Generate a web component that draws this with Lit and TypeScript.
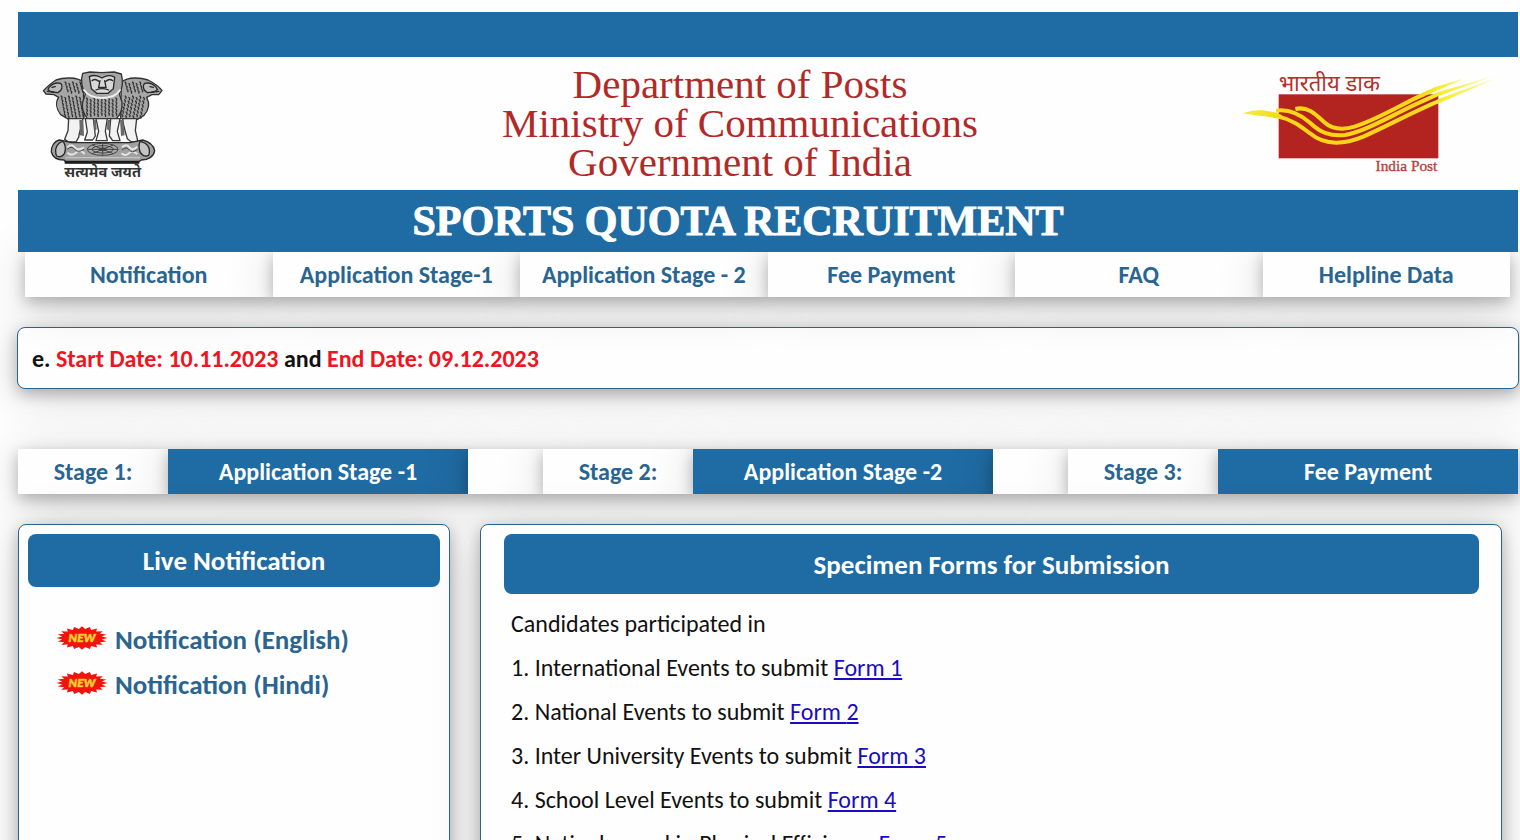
import { LitElement, html, css, svg } from "lit";
import { customElement } from "lit/decorators.js";

@customElement("state-emblem")
class StateEmblem extends LitElement {
  static styles = css`
    :host { display: block; }
    svg { display: block; width: 100%; height: auto; }
    .motto { font: bold 44px "Noto Sans", "Liberation Sans", sans-serif; }
  `;

  private curls(x: number, y: number, cols: number, rows: number, lean: number) {
    const out = [];
    for (let r = 0; r < rows; r++) {
      for (let c = 0; c < cols; c++) {
        const cx = x + c * 11 + r * lean;
        const cy = y + r * 11 + (c % 2) * 4;
        out.push(svg`<path d="M${cx} ${cy}q6 1 3 9"/>`);
      }
    }
    return out;
  }

  render() {
    return html`
      <svg viewBox="0 0 420 375" role="img" aria-label="State Emblem of India">
        <g fill="#a6a6a6" stroke="#333" stroke-width="4" stroke-linejoin="round">
          <path d="M160 66C140 50 100 52 78 60C62 70 48 84 40 92L48 102L72 104L86 112C76 126 78 146 92 164L116 178L162 176Z"/>
          <path d="M274 66C296 50 330 52 354 60C374 70 388 80 396 92L386 104L366 104L350 112C360 130 356 150 342 166L322 178L272 176Z"/>
          <path d="M158 40L180 36L216 38L252 36L274 42C280 66 276 88 268 102L276 126C278 150 268 168 258 176H172C160 160 154 146 158 126L166 102C156 84 152 60 158 40Z"/>
        </g>
        <g fill="#f2f2f2" stroke="#3a3a3a" stroke-width="4" stroke-linejoin="round">
          <path d="M116 176L114 212L104 238L116 246H138L146 232C148 210 158 194 158 176Z"/>
          <path d="M166 176L172 216L164 240H188L196 228L190 176Z"/>
          <path d="M198 176L206 214L198 242H232L226 214L232 176Z"/>
          <path d="M242 176L238 228L248 242H270L262 214L270 176Z"/>
          <path d="M278 176C280 200 286 216 292 236L304 246H324L316 212L320 176Z"/>
        </g>
        <g fill="#6a6a6a">
          <path d="M148 180L160 180L162 228L150 226ZM190 180H198L200 208L194 214ZM232 180H240L238 212L231 208ZM270 180H280L284 226L273 228Z"/>
        </g>
        <g fill="none" stroke="#333" stroke-width="4">
          ${this.curls(92, 108, 6, 6, 2)}
          ${this.curls(168, 114, 9, 5, 0)}
          ${this.curls(284, 108, 6, 6, -2)}
          ${this.curls(104, 66, 5, 3, 3)}
          ${this.curls(284, 66, 5, 3, 3)}
        </g>
        <g fill="#d8d8d8" stroke="#2a2a2a" stroke-width="4" stroke-linecap="round">
          <path d="M178 50C190 44 206 48 216 54C228 46 244 44 254 52L250 86L234 100H200L184 86Z"/>
          <path d="M186 62q10 -8 20 2M228 64q10 -10 20 -2M210 62l-4 20h22l-4 -20M198 90q18 -8 38 0" fill="none"/>
          <path d="M162 90C176 110 200 114 216 114S258 110 270 90" fill="none" stroke="#eee" stroke-width="6"/>
          <path d="M54 88C60 74 76 66 92 70C100 78 96 92 84 98C74 96 62 100 54 88ZM382 88C376 74 360 66 344 70C336 78 340 92 352 98C362 96 374 100 382 88Z" fill="#bbb"/>
          <path d="M66 82l10 -2M370 82l-10 -2M52 94l20 2M386 94l-20 2"/>
        </g>
        <g fill="#a0a0a0" stroke="#2a2a2a" stroke-width="4" stroke-linejoin="round">
          <path d="M88 240C72 244 62 262 64 276C68 292 82 300 102 300L110 308H322L334 300C356 300 372 288 374 272C370 254 354 244 338 240L300 248H126Z"/>
          <path d="M98 244C80 250 72 268 80 288C92 294 106 286 106 268C106 256 104 248 98 244ZM330 244C350 248 364 262 356 286C344 292 330 284 328 268C326 256 328 248 330 244Z" fill="#c4c4c4"/>
        </g>
        <g fill="none" stroke="#444" stroke-width="3">
          <ellipse cx="218" cy="268" rx="46" ry="18" fill="#aaa"/>
          <ellipse cx="218" cy="268" rx="32" ry="11"/>
          <ellipse cx="218" cy="268" rx="12" ry="4" fill="#333"/>
          <path d="M172 268H264M218 250V286M186 255L250 281M250 255L186 281"/>
          <path d="M112 262q12 -12 22 0t28 0M112 278q14 12 26 0t26 4M276 262q14 -12 22 0t24 -2M274 280q12 10 22 0t26 2" stroke="#e4e4e4" stroke-width="6"/>
          <path d="M112 268q12 -12 22 0t28 0M276 270q14 -12 22 0t24 -2"/>
          <path d="M106 293H330" stroke="#ccc"/>
        </g>
        <path d="M104 302H328V311H104Z" fill="#1c1c1c"/>
        <text class="motto" x="218" y="351" text-anchor="middle" fill="#333">सत्यमेव जयते</text>
      </svg>
    `;
  }
}

@customElement("post-logo")
class PostLogo extends LitElement {
  static styles = css`
    :host { display: block; }
    svg { display: block; width: 100%; height: auto; }
    .hindi { font: 66px "Noto Sans", "Liberation Serif", serif; }
    .english { font: 46px "Liberation Serif", serif; }
  `;

  render() {
    return html`
      <svg viewBox="36 0 780 375" role="img" aria-label="India Post">
        <defs>
          <linearGradient id="fade" gradientUnits="userSpaceOnUse" x1="560" y1="0" x2="800" y2="0">
            <stop offset="0" stop-color="#fcd616"/>
            <stop offset="0.35" stop-color="#f8ee3a"/>
            <stop offset="1" stop-color="#fbf8a8"/>
          </linearGradient>
          <linearGradient id="tail" gradientUnits="userSpaceOnUse" x1="40" y1="0" x2="170" y2="0">
            <stop offset="0" stop-color="#f3ec4a"/>
            <stop offset="0.8" stop-color="#f0de10"/>
            <stop offset="1" stop-color="#fcd616"/>
          </linearGradient>
        </defs>
        <text class="hindi" x="146" y="92" fill="#b5302c">भारतीय डाक</text>
        <rect x="146" y="103" width="479" height="192" fill="#b32420"/>
        <path d="M38 160C80 144 116 150 156 165L154 178C112 168 76 168 38 160Z" fill="url(#tail)"/>
        <g fill="none" stroke="url(#fade)" stroke-width="12">
          <path d="M146 170C190 180 216 202 240 220C280 254 336 256 400 230C480 194 560 150 625 124"/>
          <path d="M138 152C180 146 212 164 240 188C272 218 300 230 345 225C390 218 450 186 510 156C560 130 600 114 625 102"/>
          <path d="M196 147C232 138 256 162 282 186C304 206 334 212 374 200C440 178 500 142 560 113C580 104 600 94 620 86"/>
        </g>
        <g fill="url(#fade)">
          <path d="M622 118L800 54L627 130Z"/>
          <path d="M622 97L784 50L628 107Z"/>
          <path d="M616 81L700 56L624 91Z"/>
        </g>
        <text class="english" x="622" y="333" text-anchor="end" fill="#b5403c" stroke="#b5403c">India Post</text>
      </svg>
    `;
  }
}

@customElement("new-badge")
class NewBadge extends LitElement {
  static styles = css`
    :host { display: block; width: 52px; }
    svg { display: block; width: 100%; height: auto; }
    .word { font: italic 900 36px "Lato", sans-serif; }
  `;

  private points() {
    const list: string[] = [];
    const spikes = 20;
    for (let i = 0; i < spikes * 2; i++) {
      const a = (Math.PI * i) / spikes;
      const k = i % 2 ? 0.78 : 1;
      list.push(`${(78 + 77 * k * Math.cos(a)).toFixed(1)},${(36 + 35 * k * Math.sin(a)).toFixed(1)}`);
    }
    return list.join(" ");
  }

  render() {
    return html`
      <svg viewBox="0 0 156 84" role="img" aria-label="New">
        <polygon points=${this.points()} fill="#f3120d"/>
        <text class="word" x="78" y="49" text-anchor="middle" fill="#ffe733" stroke="#ffb52a" stroke-width="2">NEW</text>
      </svg>
    `;
  }
}

@customElement("app-root")
class AppRoot extends LitElement {
  static styles = css`
    :host {
      --blue: #1f6ba3;
      --ink: #2a6592;
      --card: 0 5px 15px rgba(0, 0, 0, 0.27), 0 6px 50px rgba(0, 0, 0, 0.16);
      display: block;
      height: 100vh;
      overflow-x: hidden;
      overflow-y: auto;
      scrollbar-width: none;
      background: #fefefe;
      color: #111;
      font-family: "Carlito", "Lato", sans-serif;
      font-size: 24px;
      line-height: 28px;
    }
    * { box-sizing: border-box; }
    a { color: inherit; text-decoration: none; }
    h1, h2, p, ul { margin: 0; padding: 0; list-style: none; }
    .page { padding: 12px 2px 0 18px; }
    header { position: relative; z-index: 1; }
    .strip { height: 45px; background: var(--blue); }
    .banner {
      display: grid;
      grid-template-columns: 220px 1fr 276px;
      align-items: start;
      height: 133px;
      padding-top: 3px;
      background: #fefefe;
    }
    .emblem { width: 140px; margin-left: 12px; }
    .logo { width: 260px; }
    .dept {
      padding-top: 5px;
      text-align: center;
      font-family: "Liberation Serif", serif;
      font-size: 41px;
      line-height: 39px;
      color: #b22a27;
    }
    .title {
      height: 62px;
      padding-right: 60px;
      background: var(--blue);
      color: #fff;
      text-align: center;
      font-family: "Liberation Serif", serif;
      font-weight: 700;
      font-size: 42px;
      line-height: 62px;
      -webkit-text-stroke: 1px #fff;
    }
    .nav {
      display: grid;
      grid-template-columns: repeat(6, 1fr);
      margin: 0 8px 0 7px;
    }
    .cell {
      display: block;
      height: 45px;
      line-height: 46px;
      background: #fefefe;
      color: var(--ink);
      text-align: center;
      font-weight: 700;
      box-shadow: var(--card);
    }
    .cell.solid { background: var(--blue); color: #fff; }
    .ticker {
      margin: 30px -1px 0;
      padding: 0 14px;
      height: 62px;
      line-height: 61px;
      overflow: hidden;
      white-space: nowrap;
      border: 1px solid var(--ink);
      border-radius: 8px;
      background: #fefefe;
      font-weight: 700;
      box-shadow: var(--card);
    }
    .date { color: #f0141e; }
    .stages {
      display: grid;
      grid-template-columns: 2fr 4fr 1fr 2fr 4fr 1fr 2fr 4fr;
      margin-top: 60px;
    }
    .columns {
      display: grid;
      grid-template-columns: 432fr 1022fr;
      gap: 30px;
      margin: 30px 16px 0 0;
    }
    .panel {
      min-height: 480px;
      border: 1px solid var(--ink);
      border-radius: 8px;
      background: #fefefe;
      box-shadow: var(--card);
    }
    .live { padding: 9px; }
    .forms { padding: 9px 22px 9px 23px; }
    .heading {
      border-radius: 8px;
      background: var(--blue);
      color: #fff;
      text-align: center;
      font-size: 27px;
      font-weight: 700;
      line-height: 32px;
      padding: 11px 0 10px;
    }
    .forms .heading { padding: 15px 0 13px; }
    .notices { padding: 30px 0 0 28px; }
    .notice {
      display: flex;
      align-items: center;
      gap: 7px;
      height: 45px;
      color: var(--ink);
      font-size: 27px;
      font-weight: 700;
    }
    .events { padding: 8px 7px; line-height: 44px; }
    .events a { color: #1a0dbf; text-decoration: underline; }
  `;

  private menu = ["Notification", "Application Stage-1", "Application Stage - 2", "Fee Payment", "FAQ", "Helpline Data"];
  private stages = [
    ["Stage 1:", "Application Stage -1"],
    ["Stage 2:", "Application Stage -2"],
    ["Stage 3:", "Fee Payment"],
  ];
  private events = [
    "International Events to submit",
    "National Events to submit",
    "Inter University Events to submit",
    "School Level Events to submit",
    "Natinal award in Physical Efficiency",
  ];

  render() {
    return html`
      <div class="page">
        <header>
          <div class="strip"></div>
          <div class="banner">
            <state-emblem class="emblem"></state-emblem>
            <div class="dept">
              <p>Department of Posts</p>
              <p>Ministry of Communications</p>
              <p>Government of India</p>
            </div>
            <post-logo class="logo"></post-logo>
          </div>
          <h1 class="title">SPORTS QUOTA RECRUITMENT</h1>
        </header>
        <nav class="nav">
          ${this.menu.map((m) => html`<a class="cell" href="#">${m}</a>`)}
        </nav>
        <p class="ticker">e. <span class="date">Start Date: 10.11.2023</span> and <span class="date">End Date: 09.12.2023</span></p>
        <div class="stages">
          ${this.stages.map(
            ([label, action], i) => html`
              ${i ? html`<span class="cell"></span>` : ""}
              <span class="cell">${label}</span>
              <a class="cell solid" href="#">${action}</a>
            `
          )}
        </div>
        <main class="columns">
          <section class="panel live">
            <h2 class="heading">Live Notification</h2>
            <ul class="notices">
              ${["English", "Hindi"].map(
                (l) => html`<li><a class="notice" href="#"><new-badge></new-badge><span>Notification (${l})</span></a></li>`
              )}
            </ul>
          </section>
          <section class="panel forms">
            <h2 class="heading">Specimen Forms for Submission</h2>
            <div class="events">
              <p>Candidates participated in</p>
              ${this.events.map((e, i) => html`<p>${i + 1}. ${e} <a href="#">Form ${i + 1}</a></p>`)}
            </div>
          </section>
        </main>
      </div>
    `;
  }
}
